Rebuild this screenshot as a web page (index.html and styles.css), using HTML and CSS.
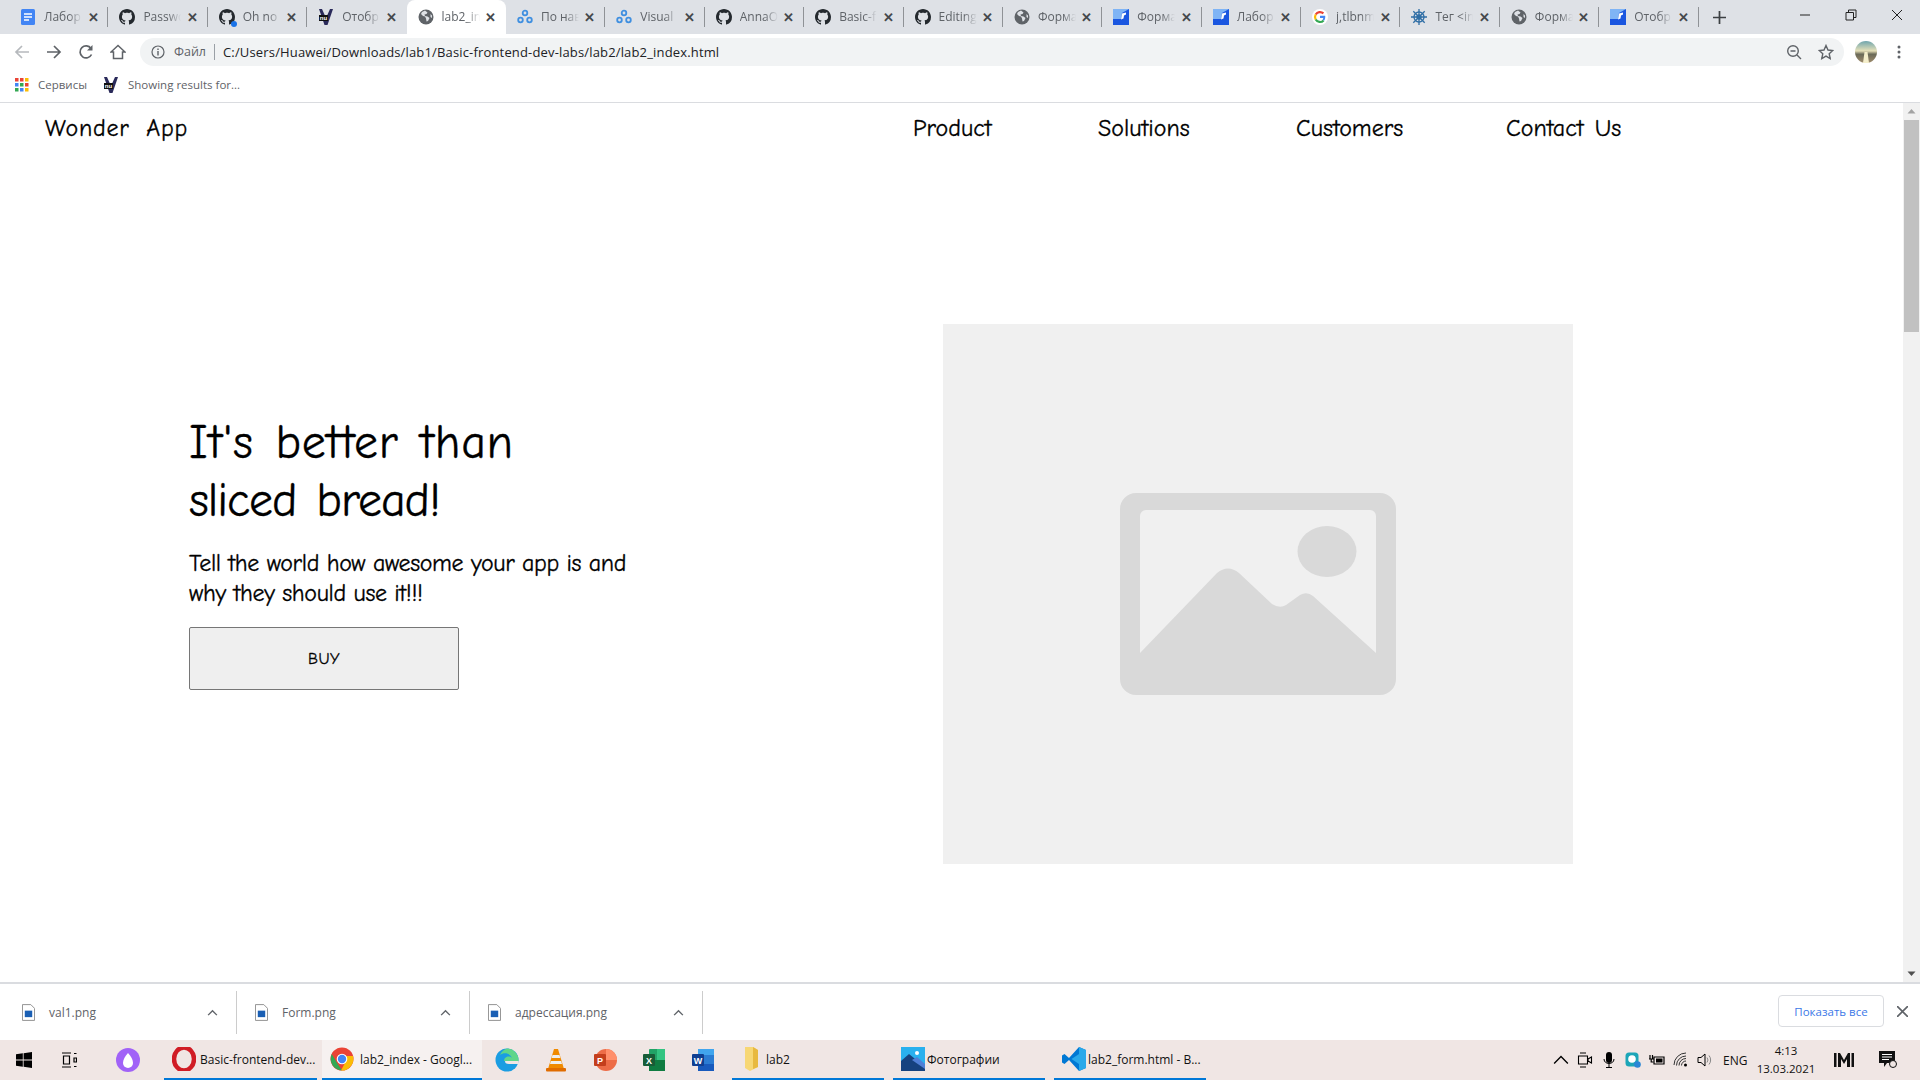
FILE: index.html
```html
<!doctype html>
<html>
<head>
	<meta charset="utf-8">
	<title>lab2_index</title>
	<link rel="stylesheet" href="styles.css">
</head>
<body>

	<!-- shared favicons -->
	<svg class="defs" aria-hidden="true">
		<symbol id="i-github" viewBox="0 0 16 16"><path fill="#24292e" d="M8 0C3.58 0 0 3.58 0 8c0 3.54 2.29 6.53 5.47 7.59.4.07.55-.17.55-.38 0-.19-.01-.82-.01-1.49-2.01.37-2.53-.49-2.69-.94-.09-.23-.48-.94-.82-1.13-.28-.15-.68-.52-.01-.53.63-.01 1.08.58 1.23.82.72 1.21 1.87.87 2.33.66.07-.52.28-.87.51-1.07-1.78-.2-3.64-.89-3.64-3.95 0-.87.31-1.59.82-2.15-.08-.2-.36-1.02.08-2.12 0 0 .67-.21 2.2.82.64-.18 1.32-.27 2-.27.68 0 1.36.09 2 .27 1.53-1.04 2.2-.82 2.2-.82.44 1.1.16 1.92.08 2.12.51.56.82 1.27.82 2.15 0 3.07-1.87 3.75-3.65 3.95.29.25.54.73.54 1.48 0 1.07-.01 1.93-.01 2.2 0 .21.15.46.55.38A8.013 8.013 0 0016 8c0-4.42-3.58-8-8-8z"/></symbol>
		<symbol id="i-globe" viewBox="0 0 16 16"><circle cx="8" cy="8" r="7.5" fill="#5f6368"/><path fill="#dee1e6" d="M7 1.500 4 3 3 5l2 2 2 .5 1 2 .5 3 1.500-.5 1.500-3-2-1.500-2.500-.5-.5-1.500 2-.5 1-1.500zM12.500 5 14 6.500V9l-1.500-1z"/></symbol>
		<symbol id="i-nu" viewBox="0 0 16 16"><path fill="#2a2a5a" d="M1 0h3l4 9 4-9h3L9.500 16h-3z"/><rect x="1" y="6" width="9" height="6" fill="#111"/><text x="5.500" y="11" class="nu-text">nu</text></symbol>
		<symbol id="i-link" viewBox="0 0 16 16"><g fill="none" stroke="#3f8fe0" stroke-width="1.800"><circle cx="8" cy="4" r="2.300"/><circle cx="3.500" cy="11" r="2.300"/><circle cx="12.500" cy="11" r="2.300"/></g></symbol>
		<symbol id="i-form" viewBox="0 0 16 16"><path fill="#1a56e0" d="M0 0h16v16H0z"/><path fill="#7fb4f5" d="M0 0h16L9 4 8 10H0z"/><path fill="#fff" d="M9 4.500 13 3.500V5.500L11 6.500 10.500 9.500 8 10.500z"/></symbol>
		<symbol id="i-google" viewBox="0 0 16 16"><circle cx="8" cy="8" r="8" fill="#fff"/><path fill="none" stroke="#ea4335" stroke-width="2.200" d="M3.700 5.500A5 5 0 0 1 11.400 4.400"/><path fill="none" stroke="#fbbc05" stroke-width="2.200" d="M3.700 5.500a5 5 0 0 0 0 5"/><path fill="none" stroke="#34a853" stroke-width="2.200" d="M3.700 10.500a5 5 0 0 0 7.900 1"/><path fill="#4285f4" d="M8 6.800h5.200c.3 2-.3 3.800-1.100 4.900L10.500 10.500c.5-.4.700-1 .8-1.500H8z"/></symbol>
		<symbol id="i-helm" viewBox="0 0 16 16"><g fill="none" stroke="#2f6ea5" stroke-width="1.300"><circle cx="8" cy="8" r="5"/><circle cx="8" cy="8" r="2"/><path d="M8 0v16M0 8h16M2.300 2.300l11.400 11.400M13.700 2.300 2.300 13.700"/></g></symbol>
	</svg>

	<div id="tabstrip">
		<div class="tab"><svg class="fav" viewBox="0 0 16 16"><rect x="1" width="14" height="16" rx="1.500" fill="#4285f4"/><path stroke="#fff" stroke-width="1.500" d="M4 5h8M4 8h8M4 11h5"/></svg><span class="tabtitle">Лабор</span><span class="tabx">&#x2715;</span></div>
		<div class="tab"><svg class="fav"><use href="#i-github"/></svg><span class="tabtitle">Passwo</span><span class="tabx">&#x2715;</span></div>
		<div class="tab"><svg class="fav"><use href="#i-github"/></svg><i class="dot"></i><span class="tabtitle">Oh no</span><span class="tabx">&#x2715;</span></div>
		<div class="tab nosep"><svg class="fav"><use href="#i-nu"/></svg><span class="tabtitle">Отобр</span><span class="tabx">&#x2715;</span></div>
		<div class="tab active nosep"><svg class="fav"><use href="#i-globe"/></svg><span class="tabtitle">lab2_in</span><span class="tabx">&#x2715;</span></div>
		<div class="tab"><svg class="fav"><use href="#i-link"/></svg><span class="tabtitle">По нав</span><span class="tabx">&#x2715;</span></div>
		<div class="tab"><svg class="fav"><use href="#i-link"/></svg><span class="tabtitle">Visual</span><span class="tabx">&#x2715;</span></div>
		<div class="tab"><svg class="fav"><use href="#i-github"/></svg><span class="tabtitle">AnnaO</span><span class="tabx">&#x2715;</span></div>
		<div class="tab"><svg class="fav"><use href="#i-github"/></svg><span class="tabtitle">Basic-f</span><span class="tabx">&#x2715;</span></div>
		<div class="tab"><svg class="fav"><use href="#i-github"/></svg><span class="tabtitle">Editing</span><span class="tabx">&#x2715;</span></div>
		<div class="tab"><svg class="fav"><use href="#i-globe"/></svg><span class="tabtitle">Форма</span><span class="tabx">&#x2715;</span></div>
		<div class="tab"><svg class="fav"><use href="#i-form"/></svg><span class="tabtitle">Форма</span><span class="tabx">&#x2715;</span></div>
		<div class="tab"><svg class="fav"><use href="#i-form"/></svg><span class="tabtitle">Лабор</span><span class="tabx">&#x2715;</span></div>
		<div class="tab"><svg class="fav"><use href="#i-google"/></svg><span class="tabtitle">j,tlbnm</span><span class="tabx">&#x2715;</span></div>
		<div class="tab"><svg class="fav"><use href="#i-helm"/></svg><span class="tabtitle">Тег &lt;in</span><span class="tabx">&#x2715;</span></div>
		<div class="tab"><svg class="fav"><use href="#i-globe"/></svg><span class="tabtitle">Форма</span><span class="tabx">&#x2715;</span></div>
		<div class="tab"><svg class="fav"><use href="#i-form"/></svg><span class="tabtitle">Отобр</span><span class="tabx">&#x2715;</span></div>
		<svg class="newtab" viewBox="0 0 12 12"><path stroke="#3c4043" stroke-width="1.600" d="M6 0v12M0 6h12"/></svg>
		<div id="winctl">
			<svg viewBox="0 0 12 12"><path stroke="#222" d="M1 6h10"/></svg>
			<svg viewBox="0 0 12 12"><path fill="none" stroke="#222" d="M1 3.500h7.500V11H1zM3.500 3.500V1H11v7.500H8.500"/></svg>
			<svg viewBox="0 0 12 12"><path stroke="#222" d="M1 1l10 10M11 1 1 11"/></svg>
		</div>
	</div>

	<div id="toolbar">
		<svg class="navicon" viewBox="0 0 16 16"><path fill="none" stroke="#b6b9bd" stroke-width="1.700" d="M15 8H2M8 2 2 8l6 6"/></svg>
		<svg class="navicon" viewBox="0 0 16 16"><path fill="none" stroke="#5f6368" stroke-width="1.700" d="M1 8h13M8 2l6 6-6 6"/></svg>
		<svg class="navicon" viewBox="0 0 16 16"><path fill="none" stroke="#5f6368" stroke-width="1.700" d="M13.500 10.500A6 6 0 1 1 13 4.500"/><path fill="#5f6368" d="M14.500 1v5.500H9z"/></svg>
		<svg class="navicon" viewBox="0 0 16 16"><path fill="none" stroke="#5f6368" stroke-width="1.500" d="M8 1.500 1 8h2.500v6.500h9V8H15z"/></svg>
		<div id="omnibox">
			<svg class="info" viewBox="0 0 14 14"><circle cx="7" cy="7" r="6" fill="none" stroke="#5f6368" stroke-width="1.200"/><path stroke="#5f6368" stroke-width="1.400" d="M7 6v4.500M7 3.500V5"/></svg>
			<span class="filelabel">Файл</span>
			<span class="url">C:/Users/Huawei/Downloads/lab1/Basic-frontend-dev-labs/lab2/lab2_index.html</span>
			<svg class="omnirt" viewBox="0 0 16 16"><g fill="none" stroke="#5f6368" stroke-width="1.400"><circle cx="7" cy="7" r="5.300"/><path d="M4.500 7h5M11 11l4 4"/></g></svg>
			<svg class="omnirt" viewBox="0 0 16 16"><path fill="none" stroke="#5f6368" stroke-width="1.400" d="m8 1.500 2 4.500 4.800.5-3.600 3.200 1 4.800L8 12.100 3.800 14.500l1-4.800L1.200 6.500 6 6z"/></svg>
		</div>
		<svg class="avatar" viewBox="0 0 22 22"><defs><linearGradient id="sky" x1="0" y1="0" x2="0" y2="1"><stop offset="0" stop-color="#6fa5ad"/><stop offset=".45" stop-color="#e6e0b8"/><stop offset=".6" stop-color="#6b6a58"/><stop offset="1" stop-color="#a08c6c"/></linearGradient></defs><circle cx="11" cy="11" r="11" fill="url(#sky)"/><path fill="#f4eecb" d="M9.500 11h3l1.500 11H8z"/></svg>
		<svg class="dots" viewBox="0 0 4 16"><g fill="#5f6368"><circle cx="2" cy="3" r="1.500"/><circle cx="2" cy="8" r="1.500"/><circle cx="2" cy="13" r="1.500"/></g></svg>
	</div>

	<div id="bookmarks">
		<svg class="bmicon" viewBox="0 0 14 14"><g id="apps"><rect width="3.500" height="3.500" fill="#ea4335"/><rect x="5" width="3.500" height="3.500" fill="#ea4335"/><rect x="10" width="3.500" height="3.500" fill="#fbbc05"/><rect y="5" width="3.500" height="3.500" fill="#4285f4"/><rect x="5" y="5" width="3.500" height="3.500" fill="#34a853"/><rect x="10" y="5" width="3.500" height="3.500" fill="#ea4335"/><rect y="10" width="3.500" height="3.500" fill="#34a853"/><rect x="5" y="10" width="3.500" height="3.500" fill="#4285f4"/><rect x="10" y="10" width="3.500" height="3.500" fill="#fbbc05"/></g></svg>
		<span class="bmtext">Сервисы</span>
		<svg class="bmicon second"><use href="#i-nu"/></svg>
		<span class="bmtext">Showing results for...</span>
	</div>

	<div id="viewport">
		<div id="page">
			<header id="sitehead">
				<a class="brand">Wonder App</a>
				<nav id="mainnav">
					<a>Product</a>
					<a>Solutions</a>
					<a>Customers</a>
					<a>Contact Us</a>
				</nav>
			</header>
			<section id="hero">
				<div class="herotext">
					<h1>It's better than<br><span class="line2">sliced bread!</span></h1>
					<p>Tell the world how awesome your app is and why they should use it!!!</p>
					<button class="buy">BUY</button>
				</div>
				<div class="placeholder">
					<svg viewBox="0 0 276 202"><path fill="#d9d9d9" fill-rule="evenodd" d="M16 0h244a16 16 0 0 1 16 16v170a16 16 0 0 1-16 16H16a16 16 0 0 1-16-16V16A16 16 0 0 1 16 0zM26 17a6 6 0 0 0-6 6V160L97 80q11-9 22 0L152 111q8 5 14 1l14-10q7-4 13 1L256 160V23a6 6 0 0 0-6-6z"/><ellipse cx="207" cy="58.500" rx="29.500" ry="25.500" fill="#d9d9d9"/></svg>
				</div>
			</section>
		</div>
		<div id="scrollbar">
			<svg class="arrow" viewBox="0 0 17 17"><path fill="#a3a3a3" d="M4.500 10.500 8.500 6l4 4.500z"/></svg>
			<div class="thumb"></div>
			<svg class="arrow" viewBox="0 0 17 17"><path fill="#505050" d="M4.500 6.500 8.500 11l4-4.500z"/></svg>
		</div>
	</div>

	<div id="downloads">
		<div class="dl"><svg class="fileicon" viewBox="0 0 14 18"><path fill="#fff" stroke="#8a8a8a" d="M.5.500h9l4 4v13H.500z"/><rect x="3" y="7" width="8" height="7" fill="#1a5fb4"/></svg><span class="dlname">val1.png</span><svg class="chev" viewBox="0 0 12 8"><path fill="none" stroke="#5f6368" stroke-width="1.600" d="m1 7 5-5 5 5"/></svg></div>
		<div class="dl"><svg class="fileicon" viewBox="0 0 14 18"><path fill="#fff" stroke="#8a8a8a" d="M.5.500h9l4 4v13H.500z"/><rect x="3" y="7" width="8" height="7" fill="#1a5fb4"/></svg><span class="dlname">Form.png</span><svg class="chev" viewBox="0 0 12 8"><path fill="none" stroke="#5f6368" stroke-width="1.600" d="m1 7 5-5 5 5"/></svg></div>
		<div class="dl"><svg class="fileicon" viewBox="0 0 14 18"><path fill="#fff" stroke="#8a8a8a" d="M.5.500h9l4 4v13H.500z"/><rect x="3" y="7" width="8" height="7" fill="#1a5fb4"/></svg><span class="dlname">адрессация.png</span><svg class="chev" viewBox="0 0 12 8"><path fill="none" stroke="#5f6368" stroke-width="1.600" d="m1 7 5-5 5 5"/></svg></div>
		<button class="showall">Показать все</button>
		<svg class="dlclose" viewBox="0 0 10 10"><path stroke="#5f6368" stroke-width="1.500" d="m0 0 10 10M10 0 0 10"/></svg>
	</div>

	<div id="taskbar">
		<div class="tb win"><svg viewBox="0 0 16 16"><path fill="#000" d="M0 2.300 6.800 1.300v6.300H0zM7.600 1.200 16 0v7.600H7.600zM0 8.400h6.800v6.300L0 13.700zM7.600 8.400H16V16l-8.400-1.200z"/></svg></div>
		<div class="tb view"><svg viewBox="0 0 16 16"><g fill="none" stroke="#000" stroke-width="1.200"><path d="M1 1h9M1 15h9M2.500 4h6v8h-6zM13 1.500h2.500M13 6h2.500v4H13zM13 14.500h2.500"/></g></svg></div>
		<div class="tb alice"><svg viewBox="0 0 24 24"><circle cx="12" cy="12" r="12" fill="#a162f7"/><path fill="#fff" d="M12 5c3 3 5 7 5 10a5 5 0 0 1-10 0c0-3 2-7 5-10z"/></svg></div>
		<div class="tb app running opera"><svg viewBox="0 0 24 24"><ellipse cx="12" cy="12" rx="10" ry="11.500" fill="none" stroke="#d01c25" stroke-width="4.500"/></svg><span>Basic-frontend-dev...</span></div>
		<div class="tb app running current"><svg viewBox="0 0 24 24"><circle cx="12" cy="12" r="11.500" fill="#ea4335"/><path fill="#34a853" d="M1.800 7 8 17.500 12 23.500A11.500 11.500 0 0 1 1.800 7z"/><path fill="#fbbc05" d="M23 9H12l4.500 4L11 23.500A11.500 11.500 0 0 0 23 9z"/><circle cx="12" cy="12" r="5.300" fill="#fff"/><circle cx="12" cy="12" r="4.200" fill="#4285f4"/></svg><span>lab2_index - Googl...</span></div>
		<div class="tb pin"><svg viewBox="0 0 24 24"><circle cx="12" cy="12" r="11.500" fill="#1b9de2"/><path fill="#5fd68a" d="M12 .5A11.500 11.500 0 0 1 23.500 13H9c0-4 5-6 8-3-2-5-8-6-12-3A11.500 11.500 0 0 1 12 .5z"/><path fill="#f0e6e4" d="M10 13h13.500c0 1-.2 2-.5 3H14c-3 0-4-1-4-3z"/></svg></div>
		<div class="tb pin"><svg viewBox="0 0 24 24"><path fill="#f08a00" d="M10 1h4l6 20H4z"/><path fill="#eee" d="M8.500 7h7l.8 3H7.700zM6.800 13h10.400l.8 3H6z"/><rect x="2" y="20" width="20" height="3.500" rx="1" fill="#e06c00"/></svg></div>
		<div class="tb pin"><svg viewBox="0 0 24 24"><circle cx="13" cy="12" r="11" fill="#ed6c47"/><path fill="#ff8f6b" d="M13 1a11 11 0 0 1 11 11H13z"/><rect x="1" y="6" width="12" height="12" rx="1" fill="#c43e1c"/><text x="7" y="15.500" class="pintext">P</text></svg></div>
		<div class="tb pin"><svg viewBox="0 0 24 24"><rect x="7" y="1" width="16" height="22" rx="1" fill="#21a366"/><rect x="15" y="1" width="8" height="11" fill="#33c481"/><rect x="7" y="12" width="16" height="11" fill="#107c41"/><rect x="1" y="6" width="12" height="12" rx="1" fill="#185c37"/><text x="7" y="15.500" class="pintext">X</text></svg></div>
		<div class="tb pin"><svg viewBox="0 0 24 24"><rect x="7" y="1" width="16" height="22" rx="1" fill="#2b7cd3"/><rect x="7" y="1" width="16" height="6" fill="#41a5ee"/><rect x="7" y="16" width="16" height="7" fill="#185abd"/><rect x="1" y="6" width="12" height="12" rx="1" fill="#103f91"/><text x="7" y="15.500" class="pintext">W</text></svg></div>
		<div class="tb app running spaced"><svg viewBox="0 0 24 24"><path fill="#f7d774" d="M5 0h8l5 3v17l-8 4-5-3z"/><path fill="#e8b93f" d="M13 0l5 3v17l-5 2z"/></svg><span>lab2</span></div>
		<div class="tb app running spaced"><svg viewBox="0 0 24 24"><rect width="24" height="24" fill="#29b0ee"/><path fill="#16427f" d="M0 24V14l8-7 16 13v4z"/><path fill="#4f7fd6" d="m11 13 5-3 8 7v5z"/><circle cx="16" cy="6" r="2" fill="#fff"/></svg><span>Фотографии</span></div>
		<div class="tb app running spaced"><svg viewBox="0 0 24 24"><path fill="#0078d4" d="M17 0 7 11 2.500 7 0 8.500v7L2.500 17 7 13l10 11 7-3V3z"/><path fill="#29a8ea" d="M17 0l7 3v18l-7 3V7L9.500 12 17 17z"/></svg><span>lab2_form.html - В...</span></div>
		<div id="tray">
			<svg class="ti" viewBox="0 0 14 8"><path fill="none" stroke="#000" stroke-width="1.200" d="m1 7 6-6 6 6"/></svg>
			<svg class="ti" viewBox="0 0 16 16"><g fill="none" stroke="#000" stroke-width="1.100"><path d="M3 1h6M3 15h6M1.500 4v8h9V4zM11 7l3.500-2v6L11 9z"/></g></svg>
			<svg class="ti" viewBox="0 0 16 16"><rect x="5" width="6" height="11" rx="3" fill="#000"/><path fill="none" stroke="#000" d="M3 7c0 6 10 6 10 0M8 12v3M5 15.500h6"/></svg>
			<svg class="ti" viewBox="0 0 16 16"><rect x=".5" y=".5" width="13" height="14" rx="3.500" fill="#1da6b8"/><circle cx="7" cy="7" r="3.800" fill="#fff"/><circle cx="12.500" cy="12.500" r="3.300" fill="#2a86d6"/></svg>
			<svg class="ti" viewBox="0 0 16 16"><path fill="none" stroke="#000" stroke-width="1.200" d="M1 3v4M3.500 3v4M0 7h4.500M2.200 7v3h2M5 5h10v7H5z"/><rect x="7" y="6.500" width="6.500" height="4" fill="#000"/></svg>
			<svg class="ti" viewBox="0 0 16 16"><g fill="none" stroke="#333"><path d="M1 13A12 12 0 0 1 13 1M3.500 13.500a9.500 9.500 0 0 1 9.500-9.500M6 13.500a7 7 0 0 1 7-7M8.500 13.500A4.500 4.500 0 0 1 13 9"/></g><circle cx="12.500" cy="13" r="1.500" fill="#000"/></svg>
			<svg class="ti" viewBox="0 0 16 16"><path fill="none" stroke="#000" d="M1 5.500h3L8 2v12L4 10.500H1z"/><path fill="none" stroke="#888" d="M10 5.500a4 4 0 0 1 0 5M12 3.500a7 7 0 0 1 0 9"/></svg>
			<span class="lang">ENG</span>
			<div class="clock"><span>4:13</span><span>13.03.2021</span></div>
			<svg class="ti wide" viewBox="0 0 20 14"><path fill="#111" d="M0 0h2.500v14H0zM4 0h2l4 7 4-7h2v14h-3V6l-3 5-3-5v8H4zM17.500 0H20v14h-2.500z"/></svg>
			<svg class="ti notif" viewBox="0 0 18 18"><path fill="#111" d="M0 0h16v12H8l-3 4v-4H0z"/><path stroke="#fff" d="M3 3.500h10M3 6h10M3 8.500h7"/><circle cx="14" cy="13" r="3.500" fill="#f0e6e4" stroke="#111"/></svg>
		</div>
	</div>

</body>
</html>
```

FILE: styles.css
```css
* {box-sizing:border-box; margin:0; padding:0;}
html, body {height:100%; overflow:hidden;}
body {display:flex; flex-direction:column; width:1920px; height:1080px; background:#fff; font-family:"Open Sans",sans-serif; color:#3c4043;}
svg {display:block; flex:none;}
.defs {position:absolute; width:0; height:0;}
.nu-text {font:bold 6px "Liberation Sans",sans-serif; fill:#fff; text-anchor:middle;}
.pintext {font:bold 9px "Liberation Sans",sans-serif; fill:#fff; text-anchor:middle;}

/* browser tabs */
#tabstrip {display:flex; align-items:center; height:34px; padding-left:9px; background:#dee1e6; flex:none;}
.tab {position:relative; display:flex; align-items:center; width:99.4px; height:34px; padding-left:11px; flex:none;}
.tab::after {content:""; position:absolute; right:0; top:7px; height:20px; width:1px; background:#8f9296;}
.tab.nosep::after {display:none;}
.tab.active {background:#fff; border-radius:8px 8px 0 0;}
.fav {width:16px; height:16px;}
.dot {position:absolute; left:23px; top:21px; width:6px; height:6px; border-radius:50%; background:#1a73e8;}
.tabtitle {width:38px; margin-left:8px; font-size:12px; line-height:16px; white-space:nowrap; overflow:hidden; color:#5f6368; -webkit-mask-image:linear-gradient(to right,#000 65%,transparent);}
.tabx {margin-left:4px; width:14px; font-size:13px; font-weight:700; text-align:center; color:#45484c;}
.newtab {width:13px; height:13px; margin-left:14px;}
#winctl {display:flex; gap:34px; margin-left:auto; margin-right:17px; align-items:center; height:30px; align-self:flex-start;}
#winctl svg {width:12px; height:12px;}

/* address row */
#toolbar {display:flex; align-items:center; height:36px; padding-left:14px; flex:none;}
.navicon {width:16px; height:16px; margin-right:16px;}
#omnibox {display:flex; align-items:center; width:1704px; height:28px; margin-left:-2px; padding-left:11px; padding-right:10px; background:#f1f3f4; border-radius:14px; flex:none;}
.info {width:14px; height:14px;}
.filelabel {margin-left:9px; padding-right:8px; border-right:1px solid #9aa0a6; font-size:12.5px; line-height:16px; color:#5f6368;}
.url {flex:1; margin-left:8px; font-size:13px; letter-spacing:.16px; color:#202124; white-space:nowrap;}
.omnirt {width:16px; height:16px; margin-left:16px;}
.avatar {width:22px; height:22px; margin-left:11px;}
.dots {width:4px; height:16px; margin-left:20px;}

/* bookmarks */
#bookmarks {display:flex; align-items:center; height:33px; padding:0 0 3px 15px; border-bottom:1px solid #dadce0; flex:none;}
.bmicon {width:14px; height:14px;}
.bmicon.second {width:16px; height:16px; margin-left:16px;}
.bmtext {margin-left:9px; font-size:11.5px; color:#5f6368;}

/* page in the window */
#viewport {display:flex; height:881px; flex:none; overflow:hidden; border-bottom:2px solid #dadce0;}
#page {flex:1; font-family:"Comic Sans MS","Comic Neue","Lato",sans-serif; color:#000; -webkit-text-stroke:.3px #000;}
#sitehead {display:flex; align-items:center; height:50px;}
.brand {width:913px; padding-left:45px; font-size:24px; word-spacing:8px; letter-spacing:.75px; flex:none;}
#mainnav {display:grid; grid-template-columns:185px 198px 210px auto; font-size:24px;}
#mainnav a {word-spacing:3px;}
#hero {display:grid; grid-template-columns:754px 630px; padding-left:189px; margin-top:171px;}
.herotext {padding-top:90px;}
h1 {font-size:48px; font-weight:400; line-height:57.6px; letter-spacing:.7px; word-spacing:5px;}
.line2 {letter-spacing:-1.1px;}
.herotext p {width:450px; margin-top:19px; font-size:24px; line-height:30px; letter-spacing:-.36px;}
.buy {display:block; width:270px; height:63px; margin-top:19px; padding-top:1px; background:#efefef; border:1px solid #767676; border-radius:2px; font:16px "Comic Sans MS","Comic Neue","Lato",sans-serif; letter-spacing:.5px; color:#000;}
.placeholder {display:flex; align-items:center; justify-content:center; height:540px; background:#f0f0f0;}
.placeholder svg {width:276px; height:202px;}

#scrollbar {display:flex; flex-direction:column; width:17px; background:#f1f1f1; flex:none;}
.arrow {width:17px; height:17px;}
.thumb {height:212px; margin:0 1px; background:#c1c1c1;}
#scrollbar .thumb {margin-bottom:auto;}

/* downloads */
#downloads {display:flex; align-items:center; height:56px; flex:none; background:#fff;}
.dl {position:relative; display:flex; align-items:center; width:233px; height:43px; padding-left:18px; border-right:1px solid #ccc; flex:none;}
.dl:first-child {width:237px; padding-left:22px;}
.fileicon {width:13px; height:17px;}
.dlname {flex:1; margin-left:14px; font-size:12px; color:#5f6368;}
.chev {width:11px; height:7px; margin-right:18px;}
.showall {width:106px; height:32px; margin-left:auto; margin-bottom:2px; background:#fff; border:1px solid #dadce0; border-radius:4px; font:11.5px "Open Sans",sans-serif; color:#3b78e7;}
.dlclose {width:11px; height:11px; margin-left:13px; margin-right:12px; margin-bottom:2px;}

/* windows taskbar */
#taskbar {display:flex; align-items:stretch; height:40px; flex:none; background:#f0e6e4;}
.tb {display:flex; align-items:center; justify-content:center; flex:none;}
.tb svg {width:24px; height:24px;}
.win {width:48px;} .win svg {width:16px; height:16px;}
.view {width:42px;} .view svg {width:16px; height:16px;}
.alice {width:48px; margin-left:14px;}
.app {justify-content:flex-start; width:152px; padding-left:8px; font-size:12px; color:#111;}
.app span {margin-left:4px; white-space:nowrap;}
.running {border-bottom:2px solid #0078d7;}
.opera {margin-left:12px; width:153px;}
.current {width:160px; margin-left:5px; background:#f6f1f0;}
.current span {margin-left:6px;}
.pin {width:49px;}
.spaced {margin-left:9px;}
.spaced span {margin-left:2px;}
.spaced:nth-child(11) {margin-left:5px;}
#tray {display:flex; align-items:center; margin-left:auto; padding-right:23px; font-size:12px; color:#111;}
.ti {width:16px; height:16px; margin:0 4px;}
#tray .ti {width:16px; height:16px;}
#tray .wide {width:20px; height:14px; margin:0 14px 0 15px;}
#tray .notif {width:18px; height:18px; margin:0 0 0 11px;}
.lang {width:30px; margin-left:6px;}
.clock {display:flex; flex-direction:column; align-items:center; width:66px; font-size:11.5px; line-height:18px;}
```
